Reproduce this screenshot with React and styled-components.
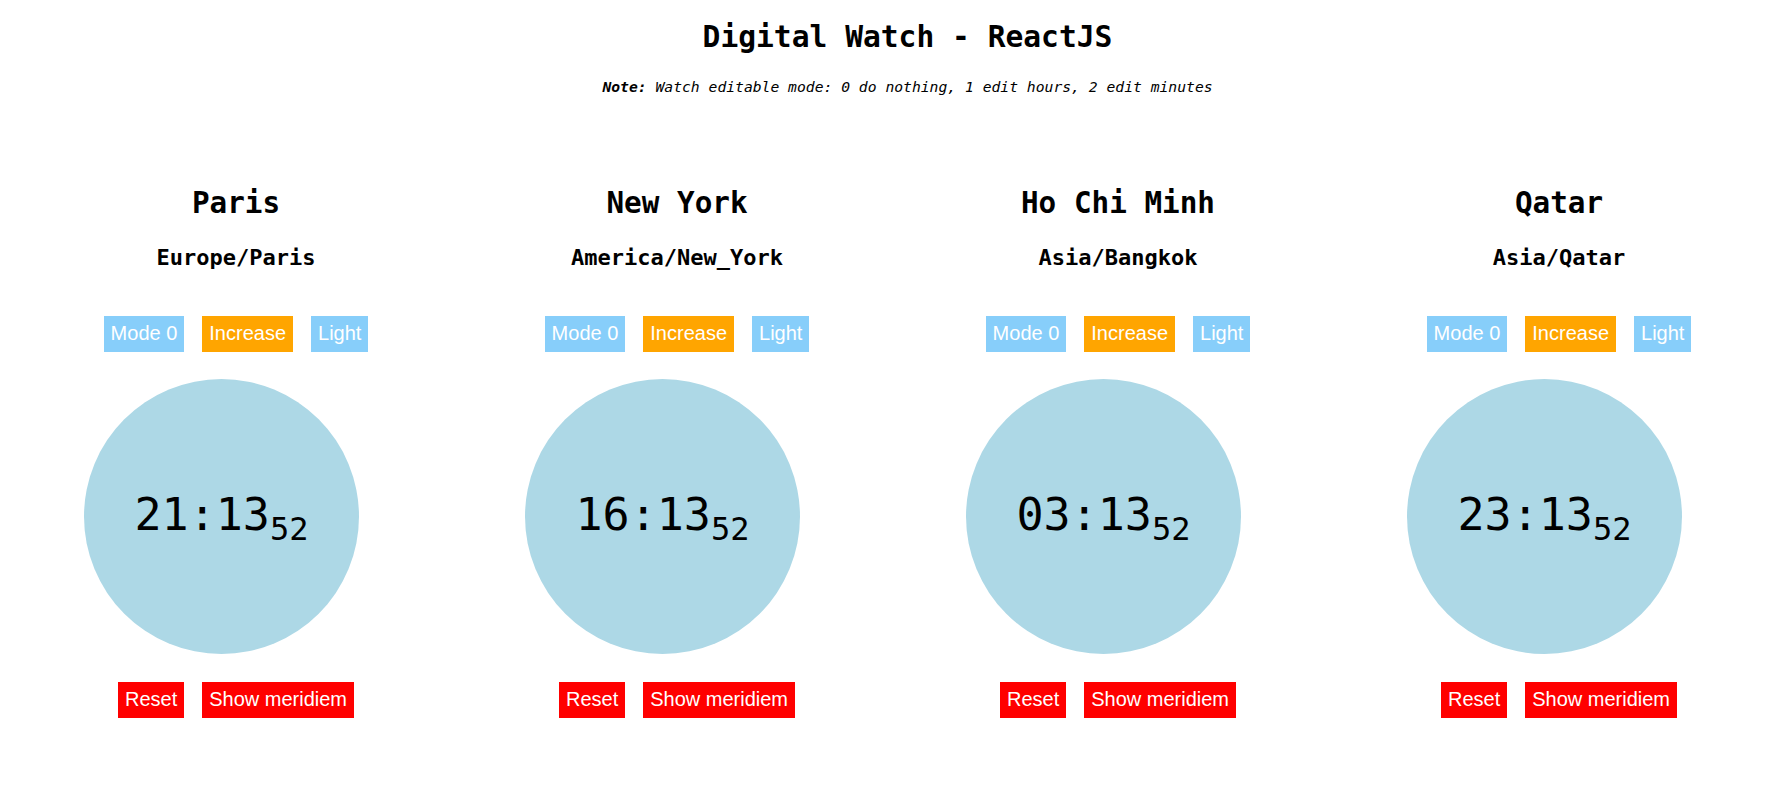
import styled, { createGlobalStyle } from "styled-components"

const GlobalStyle = createGlobalStyle`
  body {
    margin: 0;
    background: #ffffff;
    color: #000000;
    font-family: "DejaVu Sans Mono", "Liberation Mono", monospace;
  }
`

const watches = [
  { city: "Paris", zone: "Europe/Paris", time: "21:13", sec: "52" },
  { city: "New York", zone: "America/New_York", time: "16:13", sec: "52" },
  { city: "Ho Chi Minh", zone: "Asia/Bangkok", time: "03:13", sec: "52" },
  { city: "Qatar", zone: "Asia/Qatar", time: "23:13", sec: "52" },
]

export default function App() {
  return (
    <>
      <GlobalStyle />
      <Header>
        <Title>Digital Watch - ReactJS</Title>
        <Note>
          <b>Note:</b> Watch editable mode: 0 do nothing, 1 edit hours, 2 edit minutes
        </Note>
      </Header>
      <Row>
        {watches.map((w) => (
          <Watch key={w.city} {...w} />
        ))}
      </Row>
    </>
  )
}

function Watch({ city, zone, time, sec }) {
  return (
    <Column>
      <City>{city}</City>
      <Zone>{zone}</Zone>
      <Controls>
        <Button $color="#87CEFA">Mode 0</Button>
        <Button $color="#FFA500">Increase</Button>
        <Button $color="#87CEFA">Light</Button>
      </Controls>
      <Face>
        <Time>
          {time}
          <Seconds>{sec}</Seconds>
        </Time>
      </Face>
      <Controls $bottom>
        <Button $color="#FF0000">Reset</Button>
        <Button $color="#FF0000">Show meridiem</Button>
      </Controls>
    </Column>
  )
}

const Header = styled.header`
  padding-left: 25px;
  text-align: center;
`

const Title = styled.h1`
  margin: 19px 0 0;
  font-size: 29.6px;
  line-height: 36px;
  font-weight: 700;
`

const Note = styled.p`
  margin: 23px 0 0;
  font-size: 14.7px;
  line-height: 18px;
  font-style: italic;
`

const Row = styled.main`
  display: grid;
  grid-template-columns: repeat(4, 441px);
  margin-top: 89px;
  padding-left: 15.5px;
`

const Column = styled.section`
  display: flex;
  flex-direction: column;
  align-items: center;
`

const City = styled.h1`
  margin: 0;
  font-size: 29.3px;
  line-height: 36px;
  font-weight: 700;
`

const Zone = styled.h2`
  margin: 23.4px 0 0;
  font-size: 22px;
  line-height: 28px;
  font-weight: 700;
`

const Controls = styled.div`
  display: flex;
  gap: 18px;
  margin-top: ${(p) => (p.$bottom ? "28px" : "43.6px")};
`

const Button = styled.button`
  height: 36px;
  padding: 0 7px;
  border: none;
  border-radius: 0;
  background: ${(p) => p.$color};
  color: #ffffff;
  font-family: "Liberation Sans", Arial, sans-serif;
  font-size: 20px;
  line-height: 23px;
`

const Face = styled.div`
  width: 275px;
  height: 275px;
  margin-top: 27px;
  margin-right: 29px;
  border-radius: 50%;
  background: #ADD8E6;
  display: flex;
  align-items: center;
  justify-content: center;
  padding-bottom: 3px;
  box-sizing: border-box;
`

const Time = styled.div`
  font-size: 45px;
  line-height: 45px;
  white-space: nowrap;
`

const Seconds = styled.sub`
  font-size: 32px;
  line-height: 0;
  vertical-align: -10px;
`
